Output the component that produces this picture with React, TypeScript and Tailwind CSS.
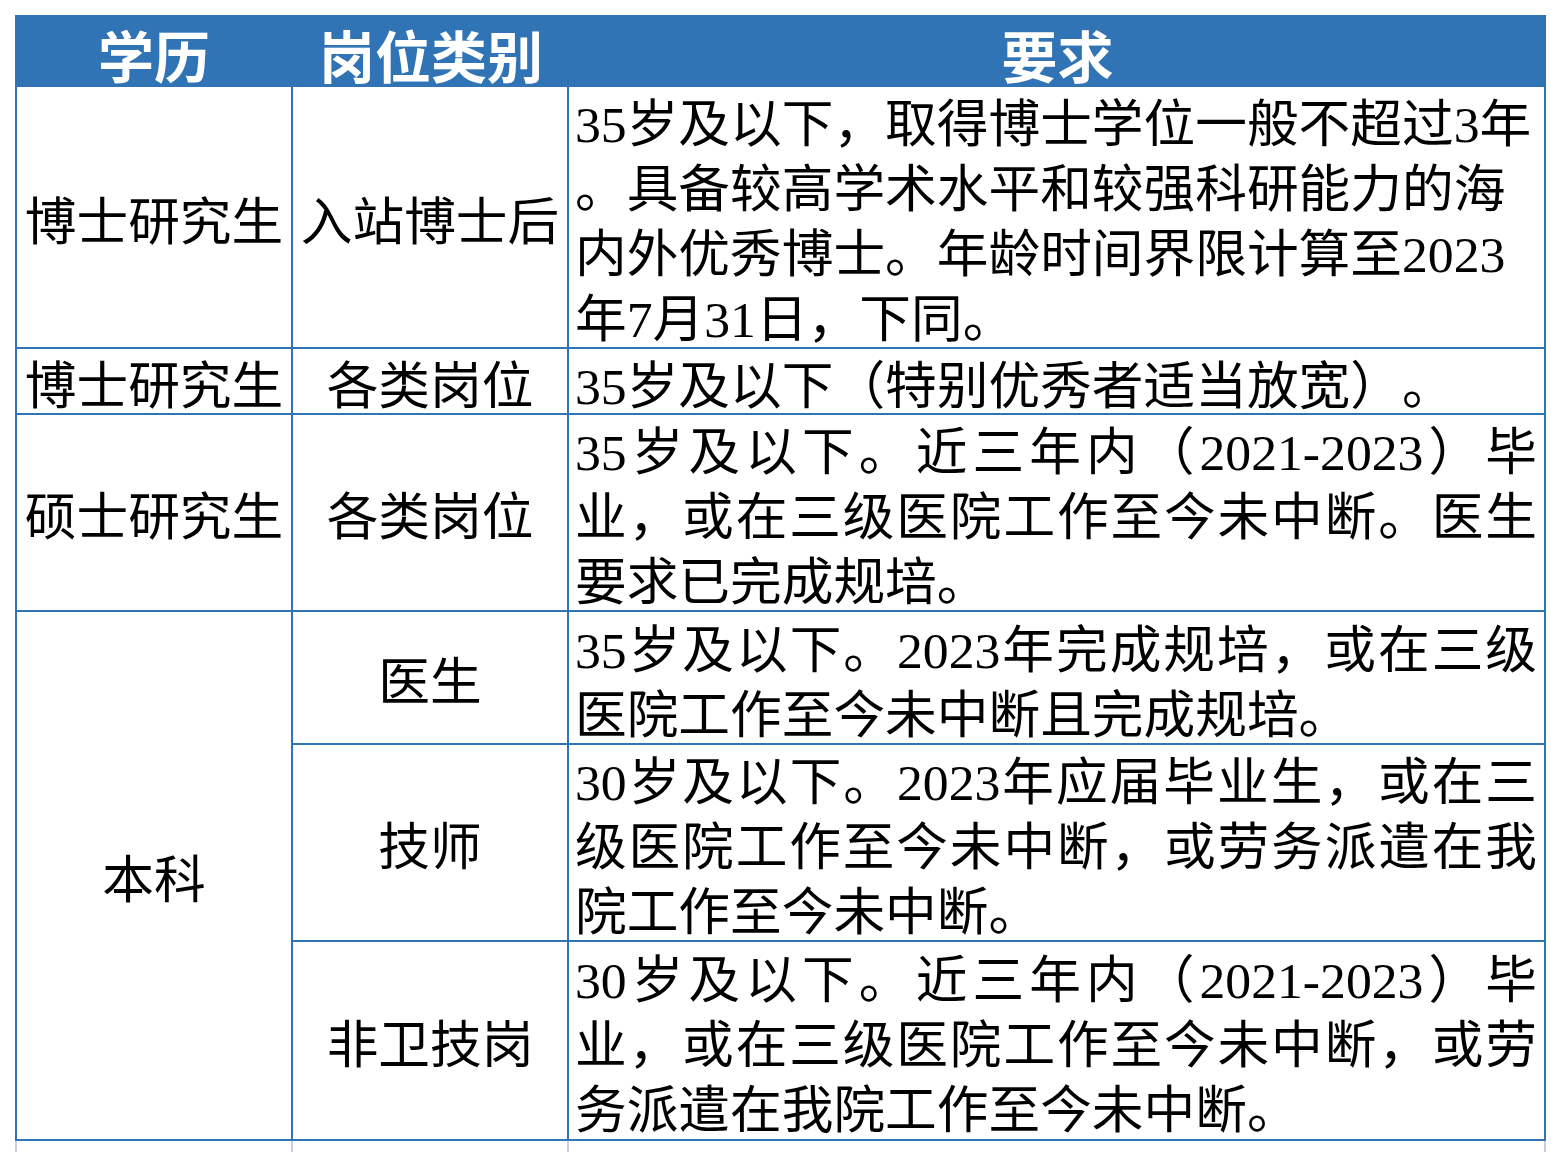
import React from 'react';

const BLUE = 'border-[#3174b5]';

type Line = { text: string; justify?: boolean };

interface Row {
  degree?: string;
  degreeSpan?: number;
  post: string;
  lines: Line[];
}

const rows: Row[] = [
  {
    degree: '博士研究生',
    post: '入站博士后',
    lines: [
      { text: '35岁及以下，取得博士学位一般不超过3年' },
      { text: '。具备较高学术水平和较强科研能力的海' },
      { text: '内外优秀博士。年龄时间界限计算至2023' },
      { text: '年7月31日，下同。' },
    ],
  },
  {
    degree: '博士研究生',
    post: '各类岗位',
    lines: [{ text: '35岁及以下（特别优秀者适当放宽）。' }],
  },
  {
    degree: '硕士研究生',
    post: '各类岗位',
    lines: [
      { text: '35岁及以下。近三年内（2021-2023）毕', justify: true },
      { text: '业，或在三级医院工作至今未中断。医生', justify: true },
      { text: '要求已完成规培。' },
    ],
  },
  {
    degree: '本科',
    degreeSpan: 3,
    post: '医生',
    lines: [
      { text: '35岁及以下。2023年完成规培，或在三级', justify: true },
      { text: '医院工作至今未中断且完成规培。' },
    ],
  },
  {
    post: '技师',
    lines: [
      { text: '30岁及以下。2023年应届毕业生，或在三', justify: true },
      { text: '级医院工作至今未中断，或劳务派遣在我', justify: true },
      { text: '院工作至今未中断。' },
    ],
  },
  {
    post: '非卫技岗',
    lines: [
      { text: '30岁及以下。近三年内（2021-2023）毕', justify: true },
      { text: '业，或在三级医院工作至今未中断，或劳', justify: true },
      { text: '务派遣在我院工作至今未中断。' },
    ],
  },
];

const rowSpanClass: Record<number, string> = {
  1: 'row-span-1',
  3: 'row-span-3',
};

export default function App() {
  return (
    <div className="min-h-[1152px] bg-white pt-[15px] pl-[15px]">
      <div className="w-[1531px]">
        {/* header */}
        <div className="grid h-[72px] grid-cols-[278px_276px_977px] bg-[#3174b5] font-['Noto_Sans_CJK_SC',sans-serif] text-[56px] font-bold leading-none text-white">
          <div className="flex items-center justify-center pt-[6px]">学历</div>
          <div className="flex items-center justify-center pt-[6px]">岗位类别</div>
          <div className="flex items-center justify-center pt-[6px]">要求</div>
        </div>

        {/* body */}
        <div className="grid grid-cols-[278px_276px_977px] grid-rows-[262px_66px_197px_133px_197px_199px_11px] font-['Liberation_Serif','Noto_Sans_CJK_SC',serif] text-[51.7px] leading-[65px] text-black [text-spacing-trim:space-all]">
          {rows.map((row, i) => (
            <React.Fragment key={i}>
              {row.degree && (
                <div
                  className={`${rowSpanClass[row.degreeSpan ?? 1]} flex min-h-0 items-center justify-center border-b-2 border-l-2 border-r-2 ${BLUE} pt-[10px] whitespace-nowrap`}
                >
                  {row.degree}
                </div>
              )}
              <div
                className={`flex min-h-0 items-center justify-center border-b-2 border-r-2 ${BLUE} pt-[10px] whitespace-nowrap`}
              >
                {row.post}
              </div>
              <div className={`flex min-h-0 flex-col justify-center border-b-2 border-r-2 ${BLUE} pt-[10px] pl-[6px] pr-[7px]`}>
                {row.lines.map((line, j) => (
                  <div
                    key={j}
                    className={
                      line.justify
                        ? 'shrink-0 whitespace-nowrap text-justify [text-align-last:justify]'
                        : 'shrink-0 whitespace-nowrap text-left'
                    }
                  >
                    {line.text}
                  </div>
                ))}
              </div>
            </React.Fragment>
          ))}
          {/* faint gridlines of the next row */}
          <div className="border-l-2 border-r-2 border-[#c8cde0]" />
          <div className="border-r-2 border-[#c8cde0]" />
          <div className="border-r-2 border-[#c8cde0]" />
        </div>
      </div>
    </div>
  );
}
